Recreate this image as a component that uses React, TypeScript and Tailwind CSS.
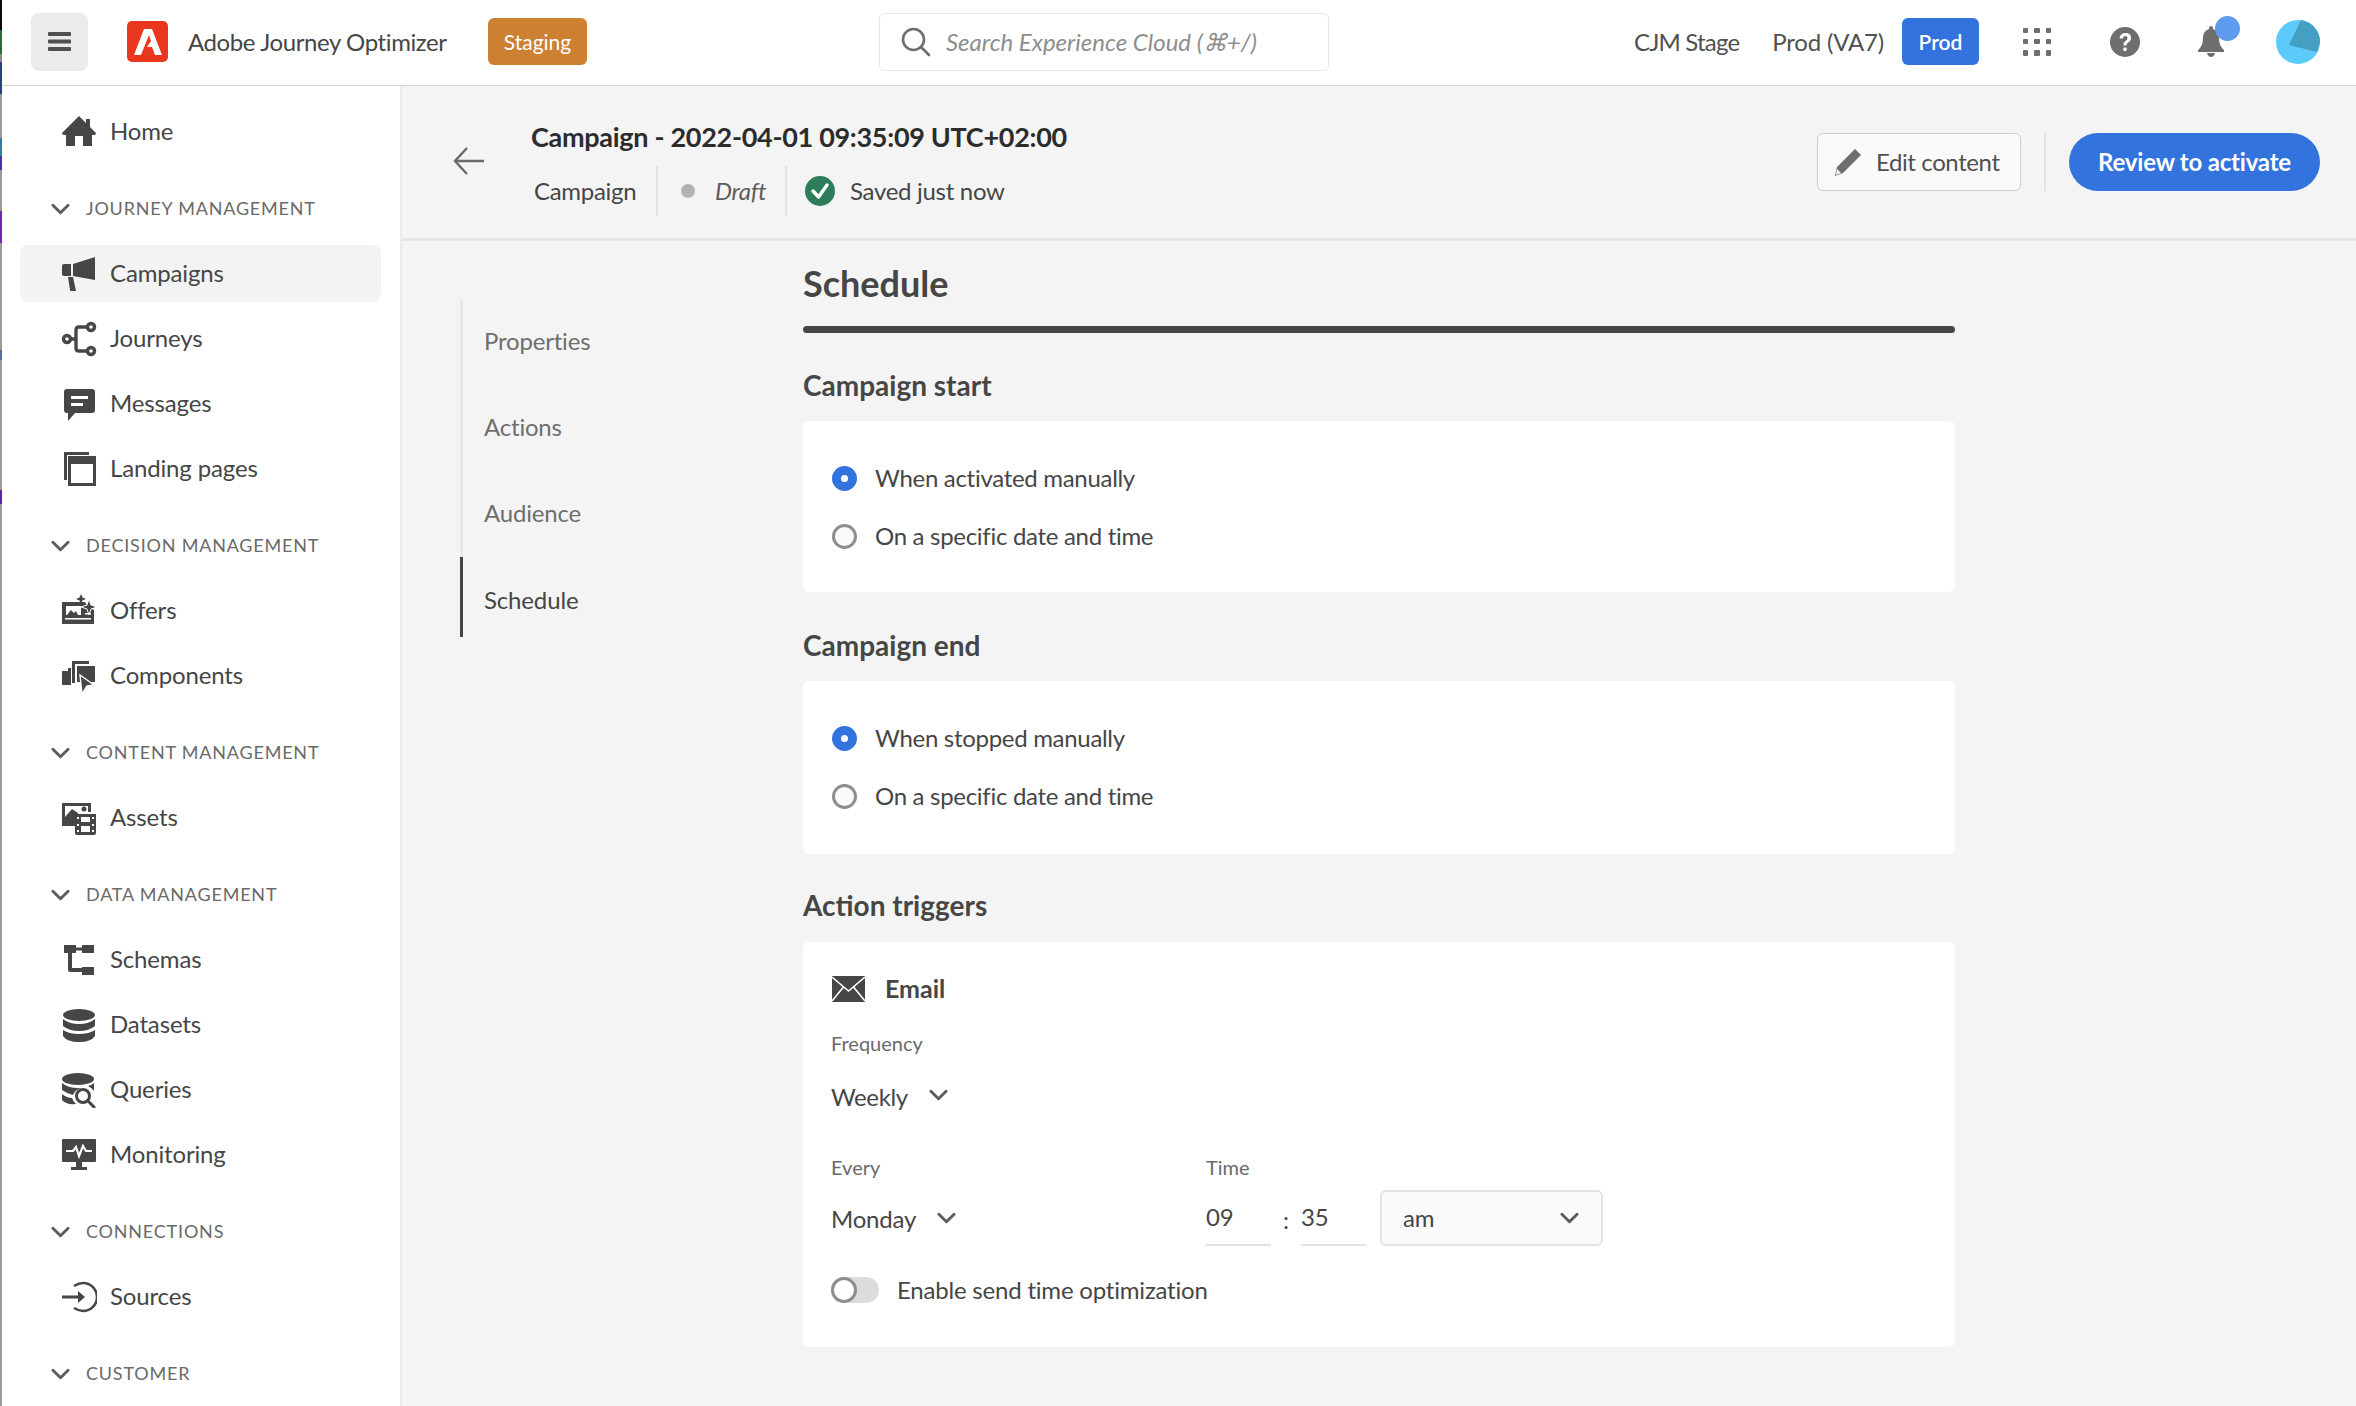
import React from "react";

const font = "font-['Lato','Noto_Sans',sans-serif]";
const bodyText = "text-[24px] tracking-[-0.3px]";

const Icon: React.FC<{ children: React.ReactNode; className?: string }> = ({ children, className }) => (
  <svg viewBox="0 0 36 36" className={className ?? "w-[36px] h-[36px] shrink-0"} fill="#464646">
    {children}
  </svg>
);

const HomeIcon = () => (
  <Icon>
    <path d="M18 2 L1 19 Q1 21 3 21 H5 V32 H14 V22 H22 V32 H31 V21 H33 Q35 21 35 19 L29 13 V5 H25 V9 Z" />
  </Icon>
);
const CampaignsIcon = () => (
  <Icon>
    <path d="M12 8 L34 1 V24 L12 20 Z" />
    <path d="M3 8 H10 V20 H3 Q1 20 1 18 V10 Q1 8 3 8 Z" />
    <path d="M7 21 H12 L15 35 H10 Q9 35 9 34 Z" />
  </Icon>
);
const JourneysIcon = () => (
  <Icon>
    <g fill="none" stroke="#464646" strokeWidth="3.4">
      <circle cx="6" cy="18" r="3.5" />
      <circle cx="30" cy="6" r="3.5" />
      <circle cx="30" cy="30" r="3.5" />
      <path d="M10 18 H15 M26 6 H18 Q15 6 15 9 V27 Q15 30 18 30 H26" />
    </g>
  </Icon>
);
const MessagesIcon = () => (
  <Icon>
    <path d="M6 3 H31 Q34 3 34 6 V24 Q34 27 31 27 H14 L7 35 V27 H6 Q3 27 3 24 V6 Q3 3 6 3 Z" />
    <path d="M10 10 H27 V13 H10 Z M10 17 H22 V20 H10 Z" fill="#fff" />
  </Icon>
);
const PagesIcon = () => (
  <Icon>
    <path d="M3 1 H28 V4 H6 V29 H3 Z" />
    <path d="M7 5 H35 V35 H7 Z M10 13 V32 H32 V13 Z" fillRule="evenodd" />
  </Icon>
);
const OffersIcon = () => (
  <Icon>
    <path d="M1 9 H24 L27 14 L33 17 V31 H1 Z" />
    <path d="M5 13 H20 V22 H5 Z" fill="#fff" />
    <path d="M6 22 L10 17 L13 20 L15 18 L17 22 Z" />
    <path d="M4 25 H30 V26.5 H4 Z M24 20 H30 V21.5 H24 Z" fill="#fff" />
    <path d="M20 1 L21.5 4.5 L25 6 L21.5 7.5 L20 11 L18.5 7.5 L15 6 L18.5 4.5 Z" />
    <path d="M28 6 L30 12 L36 14 L30 16 L28 22 L26 16 L20 14 L26 12 Z" stroke="#fff" strokeWidth="1" />
  </Icon>
);
const ComponentsIcon = () => (
  <Icon>
    <path d="M1 13 H7 V10 H10 V27 H1 Z" />
    <path d="M11 3 H28 V6 H14 V25 H11 Z" />
    <path d="M16 8 H34 V24 H16 Z" />
    <path d="M19 17 L33 27 L26 28 L21 36 Z" stroke="#fff" strokeWidth="1.4" />
  </Icon>
);
const AssetsIcon = () => (
  <Icon>
    <path d="M1 3 H30 V12 H27 V6 H4 V17 L11 9 L17 13 V26 H1 Z" />
    <circle cx="23" cy="9" r="2.5" />
    <path d="M14 14 H35 V33 Q35 35 33 35 H16 Q14 35 14 33 Z" />
    <path d="M20 17 H29 V22 H20 Z M20 26 H29 V32 H20 Z M16 17 H18 V19 H16 Z M31 17 H33 V19 H31 Z M16 24 H18 V26 H16 Z M31 24 H33 V26 H31 Z M16 30 H18 V32 H16 Z M31 30 H33 V32 H31 Z" fill="#fff" />
  </Icon>
);
const SchemasIcon = () => (
  <Icon>
    <path d="M3 3 H15 V11 H3 Z M21 3 H33 V11 H21 Z M21 25 H33 V33 H21 Z" />
    <path d="M7 10 H11 V26 H22 V30 H9 Q7 30 7 28 Z M14 5.5 H22 V8.5 H14 Z" />
  </Icon>
);
const DatasetsIcon = () => (
  <Icon>
    <ellipse cx="18" cy="8" rx="16" ry="6" />
    <path d="M2 12 Q8 17 18 17 Q28 17 34 12 V19 Q28 24 18 24 Q8 24 2 19 Z" />
    <path d="M2 23 Q8 27 18 27 Q28 27 34 23 V29 Q30 35 18 35 Q6 35 2 29 Z" />
  </Icon>
);
const QueriesIcon = () => (
  <Icon>
    <ellipse cx="17" cy="7" rx="16" ry="6" />
    <path d="M1 11 Q7 16 17 16 Q20 16 22 15.5 Q14 17 12 23 Q7 22 1 18 Z" />
    <path d="M1 22 Q6 26 11 26 Q12 29 15 32 Q5 33 1 28 Z M27 14 Q31 13 33 11 V19 Q31 16 27 14 Z" />
    <g fill="none" stroke="#464646" strokeWidth="3">
      <circle cx="22" cy="24" r="6.5" />
      <path d="M27 29 L33 35" strokeLinecap="round" />
    </g>
  </Icon>
);
const MonitoringIcon = () => (
  <Icon>
    <path d="M2 2 H34 Q35 2 35 3 V24 Q35 25 34 25 H2 Q1 25 1 24 V3 Q1 2 2 2 Z M15 25 H21 V30 H26 V33 H10 V30 H15 Z" />
    <path d="M5 14 H12 L15 10 L18 19 L22 9 L25 14 H31" fill="none" stroke="#fff" strokeWidth="2.2" />
  </Icon>
);
const SourcesIcon = () => (
  <Icon>
    <path d="M13 7 Q18 4 22 4 A14 14 0 0 1 22 32 Q18 32 13 29" fill="none" stroke="#464646" strokeWidth="2.6" />
    <path d="M1 16.6 H17 V12 L24 18 L17 24 V19.4 H1 Z" />
  </Icon>
);

const Chevron: React.FC<{ className?: string; color?: string }> = ({ className, color = "#5c5c5c" }) => (
  <svg viewBox="0 0 20 12" className={className ?? "w-[19px] h-[12px]"} fill="none">
    <path d="M2 2 L10 10 L18 2" stroke={color} strokeWidth="3" strokeLinecap="round" strokeLinejoin="round" />
  </svg>
);

type NavSection = { title?: string; items: { label: string; icon: React.ReactNode; active?: boolean }[] };

const sections: NavSection[] = [
  { items: [{ label: "Home", icon: <HomeIcon /> }] },
  {
    title: "Journey Management",
    items: [
      { label: "Campaigns", icon: <CampaignsIcon />, active: true },
      { label: "Journeys", icon: <JourneysIcon /> },
      { label: "Messages", icon: <MessagesIcon /> },
      { label: "Landing pages", icon: <PagesIcon /> },
    ],
  },
  {
    title: "Decision Management",
    items: [
      { label: "Offers", icon: <OffersIcon /> },
      { label: "Components", icon: <ComponentsIcon /> },
    ],
  },
  { title: "Content Management", items: [{ label: "Assets", icon: <AssetsIcon /> }] },
  {
    title: "Data Management",
    items: [
      { label: "Schemas", icon: <SchemasIcon /> },
      { label: "Datasets", icon: <DatasetsIcon /> },
      { label: "Queries", icon: <QueriesIcon /> },
      { label: "Monitoring", icon: <MonitoringIcon /> },
    ],
  },
  { title: "Connections", items: [{ label: "Sources", icon: <SourcesIcon /> }] },
  { title: "Customer", items: [] },
];

const Sidebar = () => (
  <aside className="w-[398px] h-full shrink-0 bg-white pt-[13px] overflow-hidden">
    {sections.map((section, i) => (
      <div key={i} className="mb-[12px]">
        {section.title && (
          <div className="h-[65px] flex items-center pl-[49px]">
            <Chevron />
            <span className="ml-[16px] text-[18px] uppercase tracking-[0.8px] text-[#6a6a6a]">{section.title}</span>
          </div>
        )}
        {section.items.map((item) => (
          <div key={item.label} className="h-[65px] flex items-center pl-[18px] pr-[19px]">
            <div
              className={
                "w-full h-[57px] flex items-center pl-[41px] rounded-[8px] " + (item.active ? "bg-[#f3f3f3]" : "")
              }
            >
              {item.icon}
              <span className="ml-[13px] pb-[1px] text-[24px] tracking-[-0.15px] text-[#464646]">{item.label}</span>
            </div>
          </div>
        ))}
      </div>
    ))}
  </aside>
);

const TopBar = () => (
  <header className="h-[86px] shrink-0 flex items-center bg-white border-b border-[#d5d5d5] pl-[29px] pr-[36px] pb-[2px] relative">
    <button className="w-[57px] h-[58px] bg-[#ebebeb] rounded-[8px] flex items-center justify-center">
      <svg viewBox="0 0 23 19" className="w-[23px] h-[19px]" fill="#505050">
        <rect x="0" y="0" width="23" height="4" rx="1" />
        <rect x="0" y="7.5" width="23" height="4" rx="1" />
        <rect x="0" y="15" width="23" height="4" rx="1" />
      </svg>
    </button>
    <div className="ml-[39px] w-[41px] h-[41px] bg-[#e8361f] rounded-[5px] flex items-center justify-center">
      <svg viewBox="0 0 30 30" className="w-[30px] h-[30px]" fill="#fff">
        <path d="M11 2 H19 L29 28 H22 L19 20 H14 L18 14 L16 8 L8 28 H1 Z" />
      </svg>
    </div>
    <span className="ml-[20px] w-[300px] text-[24px] tracking-[-0.4px] text-[#464646] whitespace-nowrap">
      Adobe Journey Optimizer
    </span>
    <span className="w-[99px] h-[47px] rounded-[6px] bg-[#cd8032] text-white text-[21px] flex items-center justify-center">
      Staging
    </span>
    <div className="ml-[292px] w-[450px] h-[58px] border border-[#e6e6e6] rounded-[6px] flex items-center pl-[21px]">
      <svg viewBox="0 0 30 30" className="w-[30px] h-[30px]" fill="none" stroke="#6e6e6e" strokeWidth="2.6">
        <circle cx="12.5" cy="12.5" r="10.5" />
        <path d="M20 20 L28 28" strokeLinecap="round" />
      </svg>
      <span className="ml-[15px] text-[24px] italic text-[#8e8e8e]">Search Experience Cloud (⌘+/)</span>
    </div>
    <div className="flex-1" />
    <span className="text-[24px] tracking-[-0.8px] text-[#505050]">CJM Stage</span>
    <span className="ml-[33px] text-[24px] tracking-[-0.2px] text-[#505050]">Prod (VA7)</span>
    <span className="ml-[18px] w-[77px] h-[47px] rounded-[6px] bg-[#3273de] text-white text-[21px] font-semibold flex items-center justify-center">
      Prod
    </span>
    <div className="ml-[44px] w-[28px] h-[28px] grid grid-cols-3 gap-[6px]">
      {Array.from({ length: 9 }).map((_, i) => (
        <span key={i} className="bg-[#6e6e6e] rounded-[1px]" />
      ))}
    </div>
    <svg viewBox="0 0 30 30" className="ml-[59px] w-[30px] h-[30px]">
      <circle cx="15" cy="15" r="15" fill="#6e6e6e" />
      <path d="M9.5 11.5 Q10 6 15.5 6 Q21 6 21 11 Q21 14 18 15.5 Q16.5 16.5 16.5 18.5 H13.5 Q13.5 15 16 13.5 Q17.5 12.5 17.5 11 Q17.5 9 15.3 9 Q13 9 12.8 11.5 Z" fill="#fff" />
      <rect x="13.3" y="20.5" width="3.4" height="3.6" rx="1" fill="#fff" />
    </svg>
    <div className="ml-[57px] relative w-[28px] h-[31px]">
      <svg viewBox="0 0 28 31" className="w-[28px] h-[31px]" fill="#6e6e6e">
        <path d="M14 0 Q16 0 16 3 Q22 5 22 12 Q22 20 27 24 V26 H1 V24 Q6 20 6 12 Q6 5 12 3 Q12 0 14 0 Z" />
        <path d="M10 27 H18 Q17 31 14 31 Q11 31 10 27 Z" />
      </svg>
      <span className="absolute left-[18px] top-[-10px] w-[25px] h-[25px] rounded-full bg-[#5f9bef]" />
    </div>
    <svg viewBox="0 0 44 44" className="ml-[51px] w-[44px] h-[44px]">
      <circle cx="22" cy="22" r="22" fill="#5ccbfb" />
      <path d="M25 0 A22 22 0 0 1 44 22 L41 32 L13 25 Z" fill="#459fc3" />
    </svg>
  </header>
);

const SubHeader = () => (
  <div className="h-[155px] shrink-0 border-b-[3px] border-[#e6e6e6] flex pl-[51px] pr-[36px]">
    <svg viewBox="0 0 32 32" className="w-[32px] h-[32px] mt-[59px]" fill="none" stroke="#6a6a6a" strokeWidth="2.4">
      <path d="M31 16 H2 M14 3 L2 16 L14 29" />
    </svg>
    <div className="ml-[46px] pt-[31px]">
      <div className="h-[40px] flex items-center text-[27px] tracking-[-0.3px] font-bold text-[#2c2c2c] whitespace-nowrap">
        Campaign - 2022-04-01 09:35:09 UTC+02:00
      </div>
      <div className={"mt-[9px] h-[50px] flex items-center text-[#464646] " + bodyText}>
        <span className="ml-[3px] w-[122px]">Campaign</span>
        <div className="w-[129px] h-full border-l-[2px] border-[#e3e3e3] flex items-center pl-[23px]">
          <span className="w-[14px] h-[14px] rounded-full bg-[#b3b3b3]" />
          <span className="ml-[20px] italic text-[#5c5c5c]">Draft</span>
        </div>
        <div className="h-full border-l-[2px] border-[#e3e3e3] flex items-center pl-[18px]">
          <svg viewBox="0 0 30 30" className="w-[30px] h-[30px]">
            <circle cx="15" cy="15" r="15" fill="#2d7d5a" />
            <path d="M8 15 L13.5 21 L22 9" fill="none" stroke="#fff" strokeWidth="3.4" strokeLinecap="round" strokeLinejoin="round" />
          </svg>
          <span className="ml-[15px]">Saved just now</span>
        </div>
      </div>
    </div>
    <div className="flex-1" />
    <div className="flex items-center">
      <button className="w-[204px] h-[58px] border border-[#cfcfcf] bg-[#fafafa] rounded-[6px] flex items-center pl-[15px] text-[24px] tracking-[-0.4px] text-[#505050]">
        <svg viewBox="0 0 30 30" className="w-[30px] h-[30px] mr-[13px]" fill="#6e6e6e">
          <path d="M22 2 L28 8 L10 26 L2 29 L4 20 Z" />
          <path d="M4 22 L8 26 L3 28 Z" fill="#fafafa" />
        </svg>
        Edit content
      </button>
      <div className="ml-[23px] w-[2px] h-[58px] bg-[#e3e3e3]" />
      <button className="ml-[23px] w-[251px] h-[58px] rounded-full bg-[#3273de] text-white text-[24px] tracking-[-0.2px] font-bold">
        Review to activate
      </button>
    </div>
  </div>
);

const tabs = ["Properties", "Actions", "Audience"];

const Tabs = () => (
  <div className="mt-[58px] w-[343px] shrink-0">
    <div className="w-[172px] border-l-[3px] border-[#e8e8e8] relative">
      {tabs.map((t) => (
        <div key={t} className="h-[86px] flex items-center pl-[21px] pb-[2px] text-[24px] tracking-[-0.2px] text-[#6e6e6e]">
          {t}
        </div>
      ))}
      <div className="h-[80px] pt-[6px] flex items-center pl-[21px] text-[24px] tracking-[-0.15px] text-[#464646] border-l-[3px] border-[#464646] -ml-[3px]">
        Schedule
      </div>
    </div>
  </div>
);

const Radio: React.FC<{ checked?: boolean; label: string }> = ({ checked, label }) => (
  <div className="h-[58px] flex items-center">
    {checked ? (
      <span className="w-[25px] h-[25px] rounded-full border-[9px] border-[#3273de] bg-white" />
    ) : (
      <span className="w-[25px] h-[25px] rounded-full border-[3px] border-[#8e8e8e] bg-[#fafafa]" />
    )}
    <span className={"ml-[18px] pb-[1px] text-[#464646] " + bodyText}>{label}</span>
  </div>
);

const SectionHeading: React.FC<{ title: string; className: string }> = ({ title, className }) => (
  <h3 className={"flex items-center text-[28px] font-bold text-[#464646] " + className}>{title}</h3>
);

const ScheduleForm = () => (
  <div className="w-[1152px]">
    <h2 className="h-[84px] flex items-center text-[36px] font-bold text-[#464646]">Schedule</h2>
    <div className="mt-[1px] h-[7px] rounded-full bg-[#464646]" />
    <SectionHeading title="Campaign start" className="h-[88px] pt-[15px]" />
    <div className="h-[171px] bg-white rounded-[6px] pl-[29px] pt-[28px]">
      <Radio checked label="When activated manually" />
      <Radio label="On a specific date and time" />
    </div>
    <SectionHeading title="Campaign end" className="h-[89px] pt-[16px]" />
    <div className="h-[173px] bg-white rounded-[6px] pl-[29px] pt-[28px]">
      <Radio checked label="When stopped manually" />
      <Radio label="On a specific date and time" />
    </div>
    <SectionHeading title="Action triggers" className="h-[88px] pt-[13px]" />
    <div className="bg-white rounded-[6px] px-[28px] pt-[23px] pb-[44px] text-[#464646]">
      <div className="h-[48px] pl-[1px] flex items-center">
        <svg viewBox="0 0 33 26" className="w-[33px] h-[26px]">
          <rect width="33" height="26" fill="#464646" />
          <path d="M0 1 L16.5 15 L33 1 M0 25 L11.5 11 M33 25 L21.5 11" fill="none" stroke="#fff" strokeWidth="1.6" />
        </svg>
        <span className="ml-[20px] text-[25px] font-bold">Email</span>
      </div>
      <div className="mt-[15px] h-[30px] flex items-center text-[20px] text-[#6a6a6a]">Frequency</div>
      <div className="mt-[19px] h-[40px] flex items-center text-[24px] tracking-[-0.4px]">
        Weekly
        <Chevron className="ml-[21px] w-[19px] h-[12px] -mt-[4px]" />
      </div>
      <div className="mt-[35px] h-[30px] flex text-[20px] text-[#6a6a6a]">
        <div className="w-[375px] flex items-center">Every</div>
        <div className="flex items-center">Time</div>
      </div>
      <div className="mt-[8px] h-[56px] flex items-center text-[24px] tracking-[-0.2px]">
        <div className="w-[375px] flex items-center pt-[2px]">
          Monday
          <Chevron className="ml-[21px] w-[19px] h-[12px] -mt-[2px]" />
        </div>
        <div className="w-[65px] h-full border-b-[2px] border-[#e3e3e3] flex items-center">09</div>
        <div className="w-[30px] text-center pt-[4px]">:</div>
        <div className="w-[65px] h-full border-b-[2px] border-[#e3e3e3] flex items-center">35</div>
        <div className="ml-[14px] w-[223px] h-full border-[2px] border-[#e3e3e3] bg-[#fafafa] rounded-[6px] flex items-center justify-between pl-[21px] pr-[22px]">
          am
          <Chevron className="w-[19px] h-[12px]" />
        </div>
      </div>
      <div className="mt-[31px] h-[26px] flex items-center">
        <div className="w-[48px] h-[26px] rounded-full bg-[#dcdcdc]">
          <div className="w-[26px] h-[26px] rounded-full border-[3px] border-[#8e8e8e] bg-white" />
        </div>
        <span className="ml-[18px] text-[24px] tracking-[-0.2px]">Enable send time optimization</span>
      </div>
    </div>
  </div>
);

// browser edge bleeding into the capture on the left
const edge: [string, string][] = [
  ["h-[30px]", "bg-[#0a0a0a]"],
  ["h-[24px]", "bg-[#2c6a3a]"],
  ["h-[8px]", "bg-[#8a8a8a]"],
  ["h-[32px]", "bg-[#27407f]"],
  ["h-[44px]", "bg-[#9a9a9a]"],
  ["h-[18px]", "bg-[#2d7fa8]"],
  ["h-[14px]", "bg-[#4a2fb0]"],
  ["h-[41px]", "bg-[#9a9a9a]"],
  ["h-[32px]", "bg-[#6a28b8]"],
  ["h-[107px]", "bg-[#9a9a9a]"],
  ["h-[10px]", "bg-[#5a6ea0]"],
  ["h-[130px]", "bg-[#9a9a9a]"],
  ["h-[14px]", "bg-[#5a22b0]"],
  ["flex-1", "bg-[#9a9a9a]"],
];

export default function App() {
  return (
    <div className={"w-[2356px] h-[1406px] flex overflow-hidden bg-[#f4f4f4] " + font}>
      <div className="w-[2px] h-full flex flex-col shrink-0">
        {edge.map(([h, bg], i) => (
          <div key={i} className={h + " " + bg} />
        ))}
      </div>
      <div className="flex-1 flex flex-col min-w-0">
        <TopBar />
        <div className="flex-1 flex min-h-0">
          <Sidebar />
          <div className="w-[2px] bg-[#ebebeb] shrink-0" />
          <main className="flex-1 flex flex-col min-w-0">
            <SubHeader />
            <div className="flex pl-[58px]">
              <Tabs />
              <ScheduleForm />
            </div>
          </main>
        </div>
      </div>
    </div>
  );
}
